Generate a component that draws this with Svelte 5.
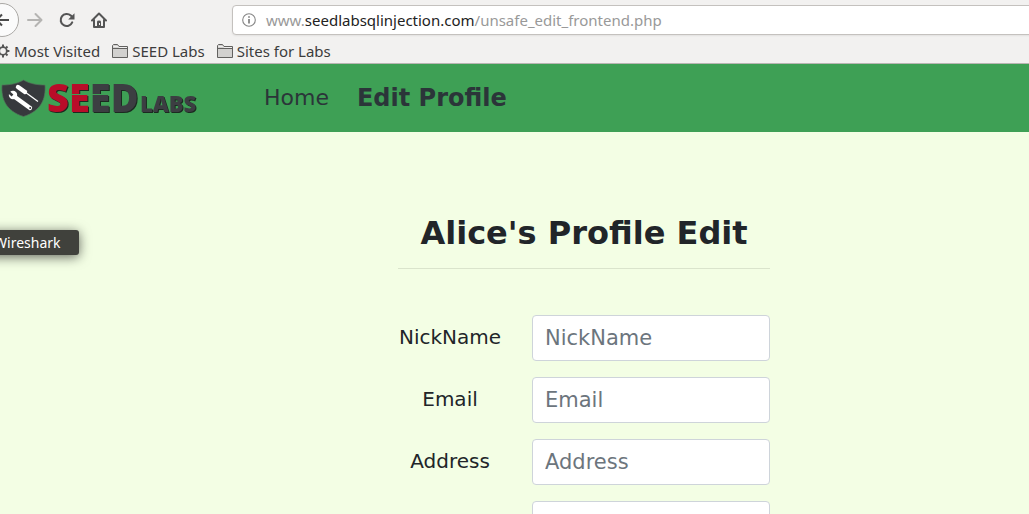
<script>
  const fields = [
    { id: 'nickname', label: 'NickName' },
    { id: 'email', label: 'Email' },
    { id: 'address', label: 'Address' },
    { id: 'phone', label: '' }
  ];
</script>

<div class="window">
  <header class="browser">
    <div class="toolbar">
      <button class="tool back" aria-label="Back">
        <svg width="16" height="16" viewBox="0 0 16 16"><path d="M2.5 8H15M8 2.5L2.5 8L8 13.5" fill="none" stroke="#4a4a4a" stroke-width="2" /></svg>
      </button>
      <button class="tool" aria-label="Forward">
        <svg width="16" height="16" viewBox="0 0 16 16"><path d="M1 8H14M8.5 2L14.5 8L8.5 14" fill="none" stroke="#b5b4b2" stroke-width="2" stroke-linecap="round" stroke-linejoin="round" /></svg>
      </button>
      <button class="tool" aria-label="Reload">
        <svg width="16" height="16" viewBox="0 0 16 16"><path d="M13.2 10.4A6 6 0 1 1 11.8 3.6L13.3 5" fill="none" stroke="#555" stroke-width="2.1" stroke-linecap="round" /><path d="M15.5 1.2V7.5H9.2Z" fill="#555" /></svg>
      </button>
      <button class="tool" aria-label="Home page">
        <svg width="16" height="16" viewBox="0 0 16 16"><path d="M1 8.5L8 1.5L15 8.5M3 8V15H13V8" fill="none" stroke="#555" stroke-width="2" stroke-linecap="round" stroke-linejoin="round" /><path d="M6 15V9.5Q6 8.5 8 8.5T10 9.5V15Z" fill="#555" /><rect x="8" y="11" width="1" height="2" fill="#f2f1f0" /></svg>
      </button>
      <div class="address">
        <svg width="14" height="14" viewBox="0 0 14 14"><circle cx="7" cy="7" r="6.3" fill="none" stroke="#858585" stroke-width="1.1" /><path d="M6.2 6H7.8V10.5H6.2ZM6.2 3.3H7.8V4.8H6.2Z" fill="#777" /></svg>
        <span class="url">www.<b>seedlabsqlinjection.com</b>/unsafe_edit_frontend.php</span>
      </div>
    </div>
    <nav class="bookmarks" aria-label="Bookmarks">
      <a href="#visited" class="visited">
        <svg width="14" height="14" viewBox="0 0 14 14"><circle cx="7" cy="7" r="3.8" fill="none" stroke="#555" stroke-width="1.8" /><path d="M7 .6V3M7 11V13.4M.6 7H3M11 7H13.4M2.5 2.5L4 4M10 10L11.5 11.5M11.5 2.5L10 4M4 10L2.5 11.5" stroke="#555" stroke-width="2" /></svg>
        Most Visited
      </a>
      {#each ['SEED Labs', 'Sites for Labs'] as name}
        <a href="#labs">
          <svg width="16" height="14" viewBox="0 0 16 14"><path d="M.5 13.5V1.5L1.5 .5H5.5L7 2.5H15.5V13.5Z" fill="#d2d1cf" stroke="#62615f" /><path d="M1 4.5H15" stroke="#62615f" /><path d="M1.5 2.5H6L7 3.5H15" fill="none" stroke="#f0efee" /></svg>
          {name}
        </a>
      {/each}
    </nav>
  </header>

  <nav class="site" aria-label="Site">
    <a class="brand" href="#home">
      <svg width="200" height="40" viewBox="0 0 200 40">
        <path d="M23.5 2C17 6 9 7 2 7C1 21 6 33 23.5 38.5C41 33 46 21 45 7C38 7 30 6 23.5 2Z" fill="#37393d" stroke="#52735a" stroke-width=".7" />
        <path d="M18 9L25 14" stroke="#fff" stroke-width="4.4" stroke-linecap="round" />
        <path d="M25 14L38 23.5" stroke="#fff" stroke-width="1.3" />
        <path d="M13.5 18L30 30" stroke="#fff" stroke-width="4.2" stroke-linecap="round" />
        <circle cx="13" cy="17" r="4.2" fill="#fff" />
        <path d="M8 13.5L12.5 17.5" stroke="#37393d" stroke-width="2.6" />
        <circle cx="30.2" cy="30" r="1" fill="#37393d" />
        <g class="wordmark">
          <text x="47" y="34" font-size="38"><tspan fill="#b90d29">SE</tspan><tspan fill="#3c3e42">ED</tspan></text>
          <text x="140" y="34" font-size="22" fill="#3c3e42">LABS</text>
        </g>
        <path d="M72 16.5H111" stroke="#3ea055" />
      </svg>
    </a>
    <a class="link" href="#home">Home</a>
    <a class="link current" href="#edit">Edit Profile</a>
  </nav>

  <main>
    <form>
      <h1>Alice's Profile Edit</h1>
      <hr />
      {#each fields as field}
        <div class="row">
          <label for={field.id}>{field.label}</label>
          <input id={field.id} type="text" placeholder={field.label} />
        </div>
      {/each}
    </form>
  </main>

  <div class="tooltip" role="tooltip">Wireshark</div>
</div>

<style>
  :global(body) { background: #f3fee4; }
  .window { position: relative; height: 100vh; overflow: hidden; display: flex; flex-direction: column; font-family: "DejaVu Sans", sans-serif; color: #212529; }
  a { color: inherit; text-decoration: none; }
  svg { display: block; flex: none; }
  .browser { flex: none; height: 63px; background: #f2f1f0; border-bottom: 1px solid #b8b5b2; font-family: "Noto Sans", sans-serif; color: #3c3c3c; }
  .toolbar { display: flex; align-items: center; height: 40px; }
  .tool { width: 32px; height: 32px; padding: 0; border: 0; background: none; display: grid; place-items: center; }
  .back { box-sizing: border-box; width: 34px; height: 34px; margin-left: -15px; border: 1px solid #aaa8a5; border-radius: 50%; background: #fbfbfb; }
  .address { flex: 1; display: flex; align-items: center; gap: 10px; height: 28px; margin-left: 117px; margin-right: -8px; padding-left: 9px; border: 1px solid #c4c1be; border-radius: 4px; background: #fff; box-shadow: 0 1px 2px #0001; }
  .url { font-size: 15px; line-height: 20px; color: #999; white-space: nowrap; }
  .url b { font-weight: 400; color: #222; }
  .bookmarks { display: flex; align-items: center; gap: 12px; height: 22px; font-size: 15px; line-height: 20px; }
  .bookmarks a { display: flex; align-items: center; gap: 4px; white-space: nowrap; }
  .visited { margin-left: -4px; }
  .site { flex: none; display: flex; align-items: center; height: 68px; background: #3ea055; color: #2b3539; }
  .brand { margin-right: 64px; }
  .wordmark { font-family: "Open Sans", sans-serif; font-weight: 800; filter: drop-shadow(1px 1px 0 #1b2a20); }
  .link { font-size: 22px; line-height: 32px; margin-right: 28px; }
  .current { font-size: 24px; font-weight: 700; }
  main { display: flex; justify-content: center; padding: 81px 0 0 139px; }
  form { width: 372px; }
  h1 { margin: 0; font-size: 32px; line-height: 40px; text-align: center; white-space: nowrap; }
  hr { margin: 15px 0 46px; border: 0; border-top: 1px solid #dae4cc; }
  .row { display: grid; grid-template-columns: 104px 1fr; gap: 30px; margin-bottom: 16px; }
  label { font-size: 20px; line-height: 44px; text-align: center; }
  input { box-sizing: border-box; width: 100%; height: 46px; padding: 0 12px; border: 1px solid #ced4da; border-radius: 4px; background: #fff; font-family: inherit; font-size: 21px; color: #495057; }
  input::placeholder { color: #6c757d; opacity: 1; }
  .tooltip { position: absolute; left: -15px; top: 230px; padding: 0 18px 0 9px; border-radius: 3px; background: #40413c; color: #fff; font: 14px/25px "Noto Sans", sans-serif; box-shadow: 0 2px 12px #0009; }
</style>
